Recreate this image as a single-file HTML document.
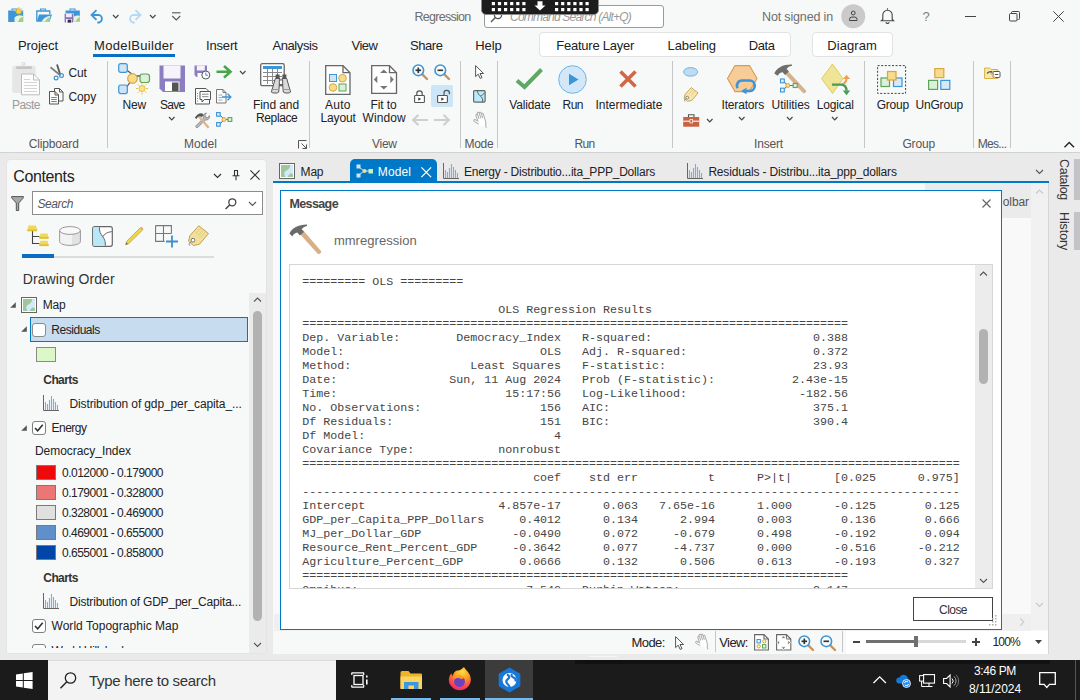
<!DOCTYPE html>
<html><head><meta charset="utf-8"><title>Regression</title>
<style>
html,body{margin:0;padding:0;}
body{width:1080px;height:700px;position:relative;overflow:hidden;background:#eaeaea;font-family:"Liberation Sans",sans-serif;}
.a{position:absolute;box-sizing:border-box;}
.t{position:absolute;white-space:pre;}
svg{overflow:visible;}
pre{margin:0;font-family:"Liberation Mono",monospace;}
</style></head><body>
<div class="a" style="left:0px;top:0px;width:1080px;height:152px;background:#f7f8f8;"></div>
<div class="a" style="left:0px;top:152px;width:1080px;height:1px;background:#d2d2d2;"></div>
<div class="a" style="left:484px;top:4.5px;width:180px;height:23.5px;background:#fff;border:1px solid #9a9a9a;border-radius:3px;"></div>
<svg class="a" style="left:490px;top:10px" width="13" height="13" viewBox="0 0 13 13"><circle cx="8" cy="5" r="3.6" fill="none" stroke="#555" stroke-width="1.3"/><path d="M5.400 7.600L1 12" stroke="#555" stroke-width="1.400"/></svg>
<span class="t" style="left:510.0px;top:9.0px;font-size:12px;line-height:16px;letter-spacing:-0.790px;color:#9a9a9a;font-style:italic;">Command Search (Alt+Q)</span>
<div class="a" style="left:481px;top:-2px;width:118px;height:17px;background:#1c1c1c;border:1px solid #8a8a8a;border-radius:0 0 5px 5px;"></div>
<svg class="a" style="left:0px;top:0px" width="1080" height="16" viewBox="0 0 1080 16"><rect x="491.8" y="2" width="3.200" height="3.200" fill="#fff"/><rect x="491.8" y="8" width="3.200" height="3.200" fill="#fff"/><rect x="497.9" y="2" width="3.200" height="3.200" fill="#fff"/><rect x="497.9" y="8" width="3.200" height="3.200" fill="#fff"/><rect x="504.0" y="2" width="3.200" height="3.200" fill="#fff"/><rect x="504.0" y="8" width="3.200" height="3.200" fill="#fff"/><rect x="510.1" y="2" width="3.200" height="3.200" fill="#fff"/><rect x="510.1" y="8" width="3.200" height="3.200" fill="#fff"/><rect x="516.2" y="2" width="3.200" height="3.200" fill="#fff"/><rect x="516.2" y="8" width="3.200" height="3.200" fill="#fff"/><rect x="522.3" y="2" width="3.200" height="3.200" fill="#fff"/><rect x="522.3" y="8" width="3.200" height="3.200" fill="#fff"/><rect x="555.0" y="2" width="3.200" height="3.200" fill="#fff"/><rect x="555.0" y="8" width="3.200" height="3.200" fill="#fff"/><rect x="561.1" y="2" width="3.200" height="3.200" fill="#fff"/><rect x="561.1" y="8" width="3.200" height="3.200" fill="#fff"/><rect x="567.2" y="2" width="3.200" height="3.200" fill="#fff"/><rect x="567.2" y="8" width="3.200" height="3.200" fill="#fff"/><rect x="573.3" y="2" width="3.200" height="3.200" fill="#fff"/><rect x="573.3" y="8" width="3.200" height="3.200" fill="#fff"/><rect x="579.4" y="2" width="3.200" height="3.200" fill="#fff"/><rect x="579.4" y="8" width="3.200" height="3.200" fill="#fff"/><rect x="585.5" y="2" width="3.200" height="3.200" fill="#fff"/><rect x="585.5" y="8" width="3.200" height="3.200" fill="#fff"/><path d="M537.500 1.300h5v4.200h3l-5.500 5-5.500-5h3z" fill="#fff"/></svg>
<span class="t" style="left:414.5px;top:9.0px;font-size:12.5px;line-height:16px;letter-spacing:-0.722px;color:#6e6e6e;">Regression</span>
<span class="t" style="left:762.0px;top:9.0px;font-size:12.5px;line-height:16px;letter-spacing:-0.151px;color:#6e6e6e;">Not signed in</span>
<div class="a" style="left:539px;top:32px;width:252px;height:25px;background:#fff;border:1px solid #e2e2e2;border-radius:4px;"></div>
<div class="a" style="left:812px;top:32px;width:81px;height:25px;background:#fff;border:1px solid #e2e2e2;border-radius:4px;"></div>
<span class="t" style="left:18.0px;top:37.5px;font-size:13px;line-height:16px;letter-spacing:-0.065px;color:#222;">Project</span>
<span class="t" style="left:94.0px;top:37.5px;font-size:13px;line-height:16px;letter-spacing:0.344px;color:#222;">ModelBuilder</span>
<div class="a" style="left:93px;top:54px;width:82px;height:2.5px;background:#0a6ec4;"></div>
<span class="t" style="left:206.0px;top:37.5px;font-size:13px;line-height:16px;letter-spacing:-0.168px;color:#222;">Insert</span>
<span class="t" style="left:272.5px;top:37.5px;font-size:13px;line-height:16px;letter-spacing:-0.426px;color:#222;">Analysis</span>
<span class="t" style="left:351.5px;top:37.5px;font-size:13px;line-height:16px;letter-spacing:-0.485px;color:#222;">View</span>
<span class="t" style="left:410.0px;top:37.5px;font-size:13px;line-height:16px;letter-spacing:-0.438px;color:#222;">Share</span>
<span class="t" style="left:475.2px;top:37.5px;font-size:13px;line-height:16px;letter-spacing:-0.084px;color:#222;">Help</span>
<span class="t" style="left:556.3px;top:37.5px;font-size:13px;line-height:16px;letter-spacing:-0.248px;color:#222;">Feature Layer</span>
<span class="t" style="left:667.5px;top:37.5px;font-size:13px;line-height:16px;letter-spacing:-0.082px;color:#222;">Labeling</span>
<span class="t" style="left:748.8px;top:37.5px;font-size:13px;line-height:16px;letter-spacing:-0.415px;color:#222;">Data</span>
<span class="t" style="left:827.2px;top:37.5px;font-size:13px;line-height:16px;letter-spacing:0.097px;color:#222;">Diagram</span>
<div class="a" style="left:107.0px;top:61px;width:1px;height:87px;background:#c6c6c6;"></div>
<div class="a" style="left:309.0px;top:61px;width:1px;height:87px;background:#c6c6c6;"></div>
<div class="a" style="left:460.0px;top:61px;width:1px;height:87px;background:#c6c6c6;"></div>
<div class="a" style="left:497.0px;top:61px;width:1px;height:87px;background:#c6c6c6;"></div>
<div class="a" style="left:672.2px;top:61px;width:1px;height:87px;background:#c6c6c6;"></div>
<div class="a" style="left:864.0px;top:61px;width:1px;height:87px;background:#c6c6c6;"></div>
<div class="a" style="left:973.0px;top:61px;width:1px;height:87px;background:#c6c6c6;"></div>
<div class="a" style="left:1009.8px;top:61px;width:1px;height:87px;background:#c6c6c6;"></div>
<span class="t" style="left:12.0px;top:97.0px;font-size:12px;line-height:16px;letter-spacing:-0.537px;color:#9a9a9a;">Paste</span>
<span class="t" style="left:68.5px;top:65.0px;font-size:12px;line-height:16px;letter-spacing:-0.158px;color:#222;">Cut</span>
<span class="t" style="left:68.5px;top:89.0px;font-size:12px;line-height:16px;letter-spacing:-0.128px;color:#222;">Copy</span>
<span class="t" style="left:28.7px;top:136.0px;font-size:12px;line-height:16px;letter-spacing:-0.151px;color:#555;">Clipboard</span>
<span class="t" style="left:122.6px;top:97.0px;font-size:12px;line-height:16px;letter-spacing:-0.202px;color:#222;">New</span>
<span class="t" style="left:160.0px;top:97.0px;font-size:12px;line-height:16px;letter-spacing:-0.763px;color:#222;">Save</span>
<span class="t" style="left:184.0px;top:136.0px;font-size:12px;line-height:16px;letter-spacing:0.064px;color:#555;">Model</span>
<span class="t" style="left:253.0px;top:97.0px;font-size:12px;line-height:16px;letter-spacing:-0.087px;color:#222;">Find and</span>
<span class="t" style="left:256.0px;top:110.0px;font-size:12px;line-height:16px;letter-spacing:-0.375px;color:#222;">Replace</span>
<span class="t" style="left:325.0px;top:97.0px;font-size:12px;line-height:16px;letter-spacing:0.254px;color:#222;">Auto</span>
<span class="t" style="left:320.5px;top:110.0px;font-size:12px;line-height:16px;letter-spacing:-0.138px;color:#222;">Layout</span>
<span class="t" style="left:370.4px;top:97.0px;font-size:12px;line-height:16px;letter-spacing:-0.062px;color:#222;">Fit to</span>
<span class="t" style="left:362.6px;top:110.0px;font-size:12px;line-height:16px;letter-spacing:0.054px;color:#222;">Window</span>
<span class="t" style="left:372.0px;top:136.0px;font-size:12px;line-height:16px;letter-spacing:-0.273px;color:#555;">View</span>
<span class="t" style="left:464.4px;top:136.0px;font-size:12px;line-height:16px;letter-spacing:-0.229px;color:#555;">Mode</span>
<span class="t" style="left:509.3px;top:97.0px;font-size:12px;line-height:16px;letter-spacing:-0.172px;color:#222;">Validate</span>
<span class="t" style="left:562.6px;top:97.0px;font-size:12px;line-height:16px;letter-spacing:-0.604px;color:#222;">Run</span>
<span class="t" style="left:595.4px;top:97.0px;font-size:12px;line-height:16px;letter-spacing:0.025px;color:#222;">Intermediate</span>
<span class="t" style="left:574.4px;top:136.0px;font-size:12px;line-height:16px;letter-spacing:-0.671px;color:#555;">Run</span>
<span class="t" style="left:721.5px;top:97.0px;font-size:12px;line-height:16px;letter-spacing:-0.168px;color:#222;">Iterators</span>
<span class="t" style="left:771.5px;top:97.0px;font-size:12px;line-height:16px;letter-spacing:-0.041px;color:#222;">Utilities</span>
<span class="t" style="left:816.7px;top:97.0px;font-size:12px;line-height:16px;letter-spacing:-0.146px;color:#222;">Logical</span>
<span class="t" style="left:754.0px;top:136.0px;font-size:12px;line-height:16px;letter-spacing:-0.168px;color:#555;">Insert</span>
<span class="t" style="left:876.7px;top:97.0px;font-size:12px;line-height:16px;letter-spacing:-0.230px;color:#222;">Group</span>
<span class="t" style="left:915.4px;top:97.0px;font-size:12px;line-height:16px;letter-spacing:-0.170px;color:#222;">UnGroup</span>
<span class="t" style="left:902.4px;top:136.0px;font-size:12px;line-height:16px;letter-spacing:-0.150px;color:#555;">Group</span>
<span class="t" style="left:977.7px;top:136.0px;font-size:12px;line-height:16px;letter-spacing:-0.678px;color:#555;">Mes...</span>
<svg class="a" style="left:8px;top:7px" width="16" height="16" viewBox="0 0 16 16"><path d="M4 3.5v-1.5h5v1.5" fill="none" stroke="#3b95d6" stroke-width="1.1"/>
<rect x="0.2" y="3.5" width="15" height="11.5" fill="#3b95d6"/>
<path d="M6.5 15V10.5c3-2.5 5.5-2.8 8.5-1.5V15z" fill="#e6f3e0"/><path d="M10 15c1-3 2.5-4.5 5-5v5z" fill="#9ccf8a"/>
<circle cx="10.8" cy="4.3" r="2.6" fill="#f4d24a" stroke="#e0b020" stroke-width="0.8"/>
<path d="M10.8 0v1M10.8 7.6v1M6.5 4.3h1M14.1 4.3h1M7.8 1.3l.7.7M13.8 1.3l-.7.7M7.8 7.3l.7-.7M13.8 7.3l-.7-.7" stroke="#e6b820" stroke-width="0.9"/></svg>
<svg class="a" style="left:36px;top:7px" width="16" height="16" viewBox="0 0 16 16"><path d="M4.5 3.5v-1.5h5v1.5" fill="none" stroke="#3b95d6" stroke-width="1.1"/>
<path d="M0.8 14.5V4h13v3" fill="none" stroke="#3b95d6" stroke-width="1.3"/>
<path d="M0.8 14.8L3 7.5h13L13.5 14.8z" fill="#3b95d6"/>
<path d="M5.5 14.8c1.5-3.5 4.5-5.5 9-6l-1.6 6z" fill="#e6f3e0"/><path d="M9 14.8c1-2.5 2.8-4 5-4.6l-1.2 4.6z" fill="#9ccf8a"/></svg>
<svg class="a" style="left:64px;top:7px" width="16" height="16" viewBox="0 0 16 16"><path d="M6 3.5v-1.5h5v1.5" fill="none" stroke="#3b95d6" stroke-width="1.1"/>
<rect x="1.5" y="3.5" width="14.3" height="11" fill="#3b95d6"/>
<path d="M10 14.5V9.5c2-1.2 3.8-1.3 5.8-.6V14.5z" fill="#e6f3e0"/><path d="M12 14.5c.6-2.4 1.8-3.6 3.8-4.2v4.2z" fill="#9ccf8a"/>
<rect x="0.3" y="6.5" width="9.2" height="9.3" rx="0.8" fill="#8a6fc0" stroke="#f7f8f8" stroke-width="0.6"/>
<rect x="2" y="7" width="5.8" height="3.2" fill="#efeaf8"/><rect x="2" y="12" width="5.8" height="3.6" fill="#fff"/><rect x="3.6" y="12.6" width="3.6" height="3" fill="#333"/></svg>
<svg class="a" style="left:90px;top:9px" width="15" height="15" viewBox="0 0 15 15"><path d="M6.5 1.2L1.5 6l5 4.8M1.8 6h7.5a4 4 0 0 1 0 7.5h-2" fill="none" stroke="#3b95d6" stroke-width="1.8"/></svg>
<svg class="a" style="left:112.55px;top:15.1px" width="5.5" height="2.8" viewBox="0 0 5.5 2.8"><path d="M0 0L2.75 2.8L5.5 0" fill="none" stroke="#444" stroke-width="1.2"/></svg>
<svg class="a" style="left:126.5px;top:9px" width="15" height="15" viewBox="0 0 15 15"><path d="M8.5 1.2L13.5 6l-5 4.8M13.2 6h-7.5a4 4 0 0 0 0 7.5h2" fill="none" stroke="#b5d9f2" stroke-width="1.8"/></svg>
<svg class="a" style="left:149.55px;top:15.1px" width="5.5" height="2.8" viewBox="0 0 5.5 2.8"><path d="M0 0L2.75 2.8L5.5 0" fill="none" stroke="#444" stroke-width="1.2"/></svg>
<svg class="a" style="left:171.5px;top:12px" width="8.5" height="9" viewBox="0 0 8.5 9"><path d="M0 0.8h8.5" stroke="#555" stroke-width="1.1"/><path d="M0.3 4L4.25 8L8.2 4" fill="none" stroke="#555" stroke-width="1.1"/></svg>
<svg class="a" style="left:840.5px;top:3.5px" width="24.5" height="24.5" viewBox="0 0 24.5 24.5"><circle cx="12.25" cy="12.25" r="12" fill="#cacaca"/><circle cx="12.25" cy="9" r="1.900" fill="none" stroke="#444" stroke-width="1"/><path d="M8.500 16.500v-1.200a2.200 2.200 0 0 1 2.200-2.200h3.100a2.200 2.200 0 0 1 2.200 2.200v1.200z" fill="none" stroke="#444" stroke-width="1"/></svg>
<svg class="a" style="left:880px;top:7px" width="15" height="17" viewBox="0 0 15 17"><path d="M7.5 1.2v1.3M2.8 12.5V8a4.7 4.7 0 0 1 9.4 0v4.5l1.4 1.3H1.4z" fill="none" stroke="#444" stroke-width="1.1"/><path d="M5.8 15.2a1.8 1.8 0 0 0 3.4 0" fill="none" stroke="#444" stroke-width="1.1"/></svg>
<span class="t" style="left:922.5px;top:9.0px;font-size:13px;line-height:16px;letter-spacing:-0.729px;color:#808080;">?</span>
<div class="a" style="left:965px;top:15.5px;width:10.5px;height:1px;background:#444;"></div>
<svg class="a" style="left:1009px;top:11px" width="11" height="11" viewBox="0 0 11 11"><rect x="0.5" y="2.5" width="7.5" height="7.5" rx="1" fill="none" stroke="#444" stroke-width="1"/><path d="M2.5 2.5v-1a1 1 0 0 1 1-1h6a1 1 0 0 1 1 1v6a1 1 0 0 1-1 1h-1" fill="none" stroke="#444" stroke-width="1"/></svg>
<svg class="a" style="left:1052.5px;top:11px" width="11" height="11" viewBox="0 0 11 11"><path d="M0.3 0.3l10.4 10.4M10.7 0.3L0.3 10.7" stroke="#444" stroke-width="1"/></svg>
<svg class="a" style="left:12px;top:62px" width="29" height="34" viewBox="0 0 29 34"><rect x="0.200" y="3.700" width="23.500" height="27.300" rx="2" fill="#e6e6e6"/>
<rect x="4" y="4.200" width="16" height="2.800" rx="1" fill="#c6c6c6"/><circle cx="11.5" cy="1.8" r="1.4" fill="none" stroke="#d2d2d2"/>
<path d="M9.500 12h12l6 6v14.800h-18z" fill="#fdfdfd" stroke="#bcbcbc"/><path d="M21.500 12v6h6" fill="none" stroke="#bcbcbc"/>
<path d="M12 17.500h6M12 20.500h13M12 23.500h13M12 26.500h13M12 29.500h13" stroke="#d4d4d4"/></svg>
<svg class="a" style="left:49.5px;top:63.5px" width="14" height="17" viewBox="0 0 14 17"><path d="M7 0.500L10 10" fill="none" stroke="#555" stroke-width="1.800"/><path d="M0.500 3.200L10.500 11.500" fill="none" stroke="#808080" stroke-width="1.800"/>
<circle cx="6.100" cy="14" r="1.900" fill="none" stroke="#3b95d6" stroke-width="1.200"/><circle cx="11.500" cy="11.500" r="1.900" fill="none" stroke="#3b95d6" stroke-width="1.200"/></svg>
<svg class="a" style="left:49px;top:88px" width="15" height="17" viewBox="0 0 15 17"><path d="M5.500 3.500v-3h5l3.500 3.500v9h-4" fill="#fbfbfb" stroke="#555"/><path d="M10.500 0.500v3.500h3.500" fill="none" stroke="#555"/>
<path d="M0.500 3.500h5.500l3.500 3.500v9h-9z" fill="#fbfbfb" stroke="#555"/><path d="M6 3.500v3.500h3.500" fill="none" stroke="#555"/>
<path d="M2.200 9.500h5.600M2.200 11.500h5.600M2.200 13.500h5.600" stroke="#3b95d6"/></svg>
<svg class="a" style="left:118px;top:63px" width="33" height="32" viewBox="0 0 33 32"><path d="M8 6.5L15 12M8 25L15 15M17 13h8" stroke="#555" stroke-width="1.3"/>
<rect x="0.7" y="0.7" width="8.6" height="8.6" rx="2" fill="#cfe4f6" stroke="#3b95d6" stroke-width="1.2"/>
<rect x="0.7" y="22" width="8.6" height="8.6" rx="2" fill="#cfe4f6" stroke="#3b95d6" stroke-width="1.2"/>
<rect x="22" y="11" width="9.5" height="8.5" rx="2.5" fill="#dcefd8" stroke="#5aa55a" stroke-width="1.2"/>
<circle cx="14.5" cy="15.5" r="4.8" fill="#f6dc8c" stroke="#d9a640" stroke-width="1.2"/>
<circle cx="24" cy="25.5" r="3" fill="#f8e48c" stroke="#e6c040" stroke-width="1"/>
<path d="M24 19.5v2M24 29.5v2M18 25.5h2M28 25.5h2M19.8 21.3l1.4 1.4M28.2 21.3l-1.4 1.4M19.8 29.7l1.4-1.4M28.2 29.7l-1.4-1.4" stroke="#e6c040" stroke-width="1"/></svg>
<svg class="a" style="left:159px;top:64.5px" width="27" height="28" viewBox="0 0 27 28"><path d="M0.500 0.500h25.500v26.500h-22l-3.500-3.500z" fill="#8c7cc0"/><rect x="4.500" y="0.500" width="17" height="13" fill="#f6f3fb"/>
<rect x="6" y="16.500" width="14.500" height="9.500" fill="#fff"/><rect x="13" y="17.500" width="6.500" height="8.500" fill="#555"/></svg>
<svg class="a" style="left:169.25px;top:117.3px" width="5.5" height="2.8" viewBox="0 0 5.5 2.8"><path d="M0 0L2.75 2.8L5.5 0" fill="none" stroke="#444" stroke-width="1.2"/></svg>
<svg class="a" style="left:194px;top:65px" width="17" height="15" viewBox="0 0 17 15"><path d="M0.5 0.5h12.5v11.5h-10.5l-2-2z" fill="#8c7cc0"/><rect x="2.8" y="0.5" width="8" height="5" fill="#f4f1fa"/><rect x="3.5" y="8" width="5" height="4" fill="#fff"/>
<circle cx="11.8" cy="10" r="4" fill="#fff" stroke="#555" stroke-width="1"/><path d="M11.8 7.5v2.7h2.2" fill="none" stroke="#3b95d6" stroke-width="1"/></svg>
<svg class="a" style="left:216px;top:65px" width="17" height="14" viewBox="0 0 17 14"><path d="M0.5 6.8h13M8 1l6.5 5.8L8 12.6" fill="none" stroke="#4aa54a" stroke-width="2.6"/></svg>
<svg class="a" style="left:239.65px;top:71.1px" width="5.5" height="2.8" viewBox="0 0 5.5 2.8"><path d="M0 0L2.75 2.8L5.5 0" fill="none" stroke="#444" stroke-width="1.2"/></svg>
<svg class="a" style="left:194.5px;top:88px" width="16" height="17" viewBox="0 0 16 17"><path d="M0.5 0.5h10.5l3.5 3.5v12h-14z" fill="#fbfbfb" stroke="#555"/>
<path d="M2 5.5h1M2 8h1M2 10.5h1M2 13h1" stroke="#3b95d6" stroke-width="1.2"/>
<path d="M5 3.5h10.5v8h-6l-2.5 2.5v-2.5h-2z" fill="#fff" stroke="#555"/><path d="M7 6.2h6.5M7 8.7h6.5" stroke="#888"/></svg>
<svg class="a" style="left:216px;top:89px" width="17" height="15" viewBox="0 0 17 15"><path d="M0.5 0.5h6.5l3 3v10.5h-9.5z" fill="#fbfbfb" stroke="#777"/><path d="M7 0.5v3h3" fill="none" stroke="#777"/>
<path d="M2.5 6h4M2.5 8.5h4M2.5 11h4" stroke="#aaa"/><path d="M6 8h8.5M11.5 4.8l3.3 3.2-3.3 3.2" fill="none" stroke="#3b95d6" stroke-width="1.4"/></svg>
<svg class="a" style="left:194px;top:111.5px" width="17" height="17" viewBox="0 0 17 17"><path d="M13.5 1.5a3.6 3.6 0 0 0-3 5.2L3 14.2a1.3 1.3 0 0 0 1.8 1.8l7.5-7.5a3.6 3.6 0 0 0 4.2-4.4l-2 2-2-.6-.6-2z" fill="#b8b8b8" stroke="#777" stroke-width="0.7" transform="translate(-1,-0.5)"/>
<path d="M5.5 3.5l10 11.5-1.8 1.6L4 5z" fill="#dbb48a"/>
<path d="M0.8 5.8c1.5-3 4.2-4.8 7.2-4.6l1.6 1.8-2.2 2.2-1.4-1.2c-1.6.4-2.8 1.6-3.4 3z" fill="#555"/></svg>
<svg class="a" style="left:216px;top:112px" width="17" height="15" viewBox="0 0 17 15"><path d="M4 3L8 7.5L4 12M9 7.5h3" fill="none" stroke="#666" stroke-width="1"/>
<rect x="0.6" y="0.6" width="3.6" height="3.6" fill="#e0effa" stroke="#3b95d6" stroke-width="1.1"/><rect x="0.6" y="10.6" width="3.6" height="3.6" fill="#e0effa" stroke="#3b95d6" stroke-width="1.1"/>
<circle cx="8" cy="7.5" r="2" fill="#f6dc8c" stroke="#d9a640" stroke-width="1"/><rect x="12" y="5.6" width="3.8" height="3.8" fill="#e2f2de" stroke="#5aa55a" stroke-width="1.1"/></svg>
<svg class="a" style="left:260px;top:63px" width="33" height="33" viewBox="0 0 33 33"><rect x="0.7" y="0.7" width="23.5" height="22" rx="1.5" fill="#fff" stroke="#666" stroke-width="1.3"/>
<rect x="3" y="3" width="19" height="3" fill="#3b95d6"/>
<path d="M3 9.5h19M3 13.5h19M3 17.5h19M7.5 6v15M12.5 6v15M17.5 6v15" stroke="#888" stroke-width="1"/>
<path d="M15.300 15.500h4.600l-1.200 13.600c-.8 1.300-6.600 1.300-7.300 0z" fill="#dadada" stroke="#555" stroke-width="1"/><path d="M22.100 15.500h4.600l3.900 13.600c-.7 1.300-6.500 1.300-7.300 0z" fill="#dadada" stroke="#555" stroke-width="1"/>
<rect x="15.600" y="11.500" width="4" height="4.500" fill="#555"/><rect x="22.400" y="11.500" width="4" height="4.500" fill="#555"/><path d="M11.400 26.500h7.300M23.300 26.500h7.300" stroke="#999" stroke-width="1"/>
<rect x="19.300" y="17" width="3.400" height="4.500" fill="#fff" stroke="#555" stroke-width="0.900"/></svg>
<svg class="a" style="left:298px;top:140px" width="9" height="9" viewBox="0 0 9 9"><path d="M0.5 8.5v-8h8" fill="none" stroke="#555" stroke-width="1"/><path d="M3.5 3.500l5 5M8.500 4.500v4h-4" fill="none" stroke="#555" stroke-width="1"/></svg>
<svg class="a" style="left:325px;top:64.5px" width="26" height="30" viewBox="0 0 26 30"><path d="M0.7 0.7h17.300l7 7v21.600h-24.300z" fill="#fff" stroke="#666" stroke-width="1.300"/><path d="M18 0.700v7h7" fill="none" stroke="#666" stroke-width="1.300"/>
<rect x="4.500" y="9.500" width="7" height="7" fill="#cfe4f6" stroke="#3b95d6"/><circle cx="17.500" cy="13.200" r="3.800" fill="#f6dc8c" stroke="#d9a640"/>
<circle cx="8" cy="22.500" r="3.800" fill="#f6dc8c" stroke="#d9a640"/><rect x="14" y="19" width="7" height="7" fill="#dcefd8" stroke="#5aa55a"/></svg>
<svg class="a" style="left:370.5px;top:65px" width="26" height="29" viewBox="0 0 26 29"><path d="M0.700 0.700h17.800l7 7v20.600h-24.800z" fill="#fff" stroke="#666" stroke-width="1.300"/><path d="M18.500 0.700v7h7" fill="none" stroke="#666" stroke-width="1.300"/>
<path d="M12.800 4.500l3.800 3.500h-7.600zM12.800 24.500l3.800-3.500h-7.600zM2.800 14.500l3.500-3.800v7.600zM22.800 14.500l-3.500-3.800v7.600z" fill="#777"/></svg>
<svg class="a" style="left:412px;top:64px" width="16.0" height="16.0" viewBox="0 0 16 16"><path d="M9.800 9.800L15 15" stroke="#c8935a" stroke-width="2.400" stroke-linecap="round"/><circle cx="6.300" cy="6.300" r="5.300" fill="#fff" stroke="#3b95d6" stroke-width="1.600"/><path d="M3.500 6.300h5.600" stroke="#333" stroke-width="1.700"/><path d="M6.300 3.500v5.600" stroke="#333" stroke-width="1.700"/></svg>
<svg class="a" style="left:434px;top:64px" width="16.0" height="16.0" viewBox="0 0 16 16"><path d="M9.800 9.800L15 15" stroke="#c8935a" stroke-width="2.400" stroke-linecap="round"/><circle cx="6.300" cy="6.300" r="5.300" fill="#fff" stroke="#3b95d6" stroke-width="1.600"/><path d="M3.500 6.300h5.600" stroke="#333" stroke-width="1.700"/></svg>
<svg class="a" style="left:414px;top:89.5px" width="11" height="13" viewBox="0 0 11 13"><path d="M2.800 5.500v-2a2.700 2.700 0 0 1 5.400 0v2" fill="none" stroke="#555" stroke-width="1.200"/><rect x="0.600" y="5.500" width="9.800" height="7" rx="0.800" fill="#fff" stroke="#555" stroke-width="1.100"/><path d="M4.300 7.500l2.800 1.600-2.800 1.600z" fill="#333"/></svg>
<div class="a" style="left:431px;top:85px;width:22px;height:22px;background:#cce6f8;border-radius:2px;"></div>
<svg class="a" style="left:436.5px;top:88.5px" width="14" height="14" viewBox="0 0 14 14"><path d="M7 6.500v-2.500a2.700 2.700 0 0 1 5.400 0v1.200" fill="none" stroke="#555" stroke-width="1.200"/><rect x="0.600" y="6.500" width="9.800" height="7" rx="0.800" fill="#fff" stroke="#555" stroke-width="1.100"/><path d="M4.300 8.500l2.800 1.600-2.800 1.600z" fill="#333"/></svg>
<svg class="a" style="left:412px;top:113.5px" width="16" height="12" viewBox="0 0 16 12"><path d="M1 6h15M6.500 0.800L1.200 6l5.300 5.200" fill="none" stroke="#cfcfcf" stroke-width="2.200"/></svg>
<svg class="a" style="left:434px;top:113.5px" width="16" height="12" viewBox="0 0 16 12"><path d="M0 6h15M9.500 0.800L14.800 6l-5.300 5.200" fill="none" stroke="#cfcfcf" stroke-width="2.200"/></svg>
<svg class="a" style="left:475px;top:65px" width="10" height="14" viewBox="0 0 10 14"><path d="M0.600 0.600v11l2.600-2.400 2 4.200 1.800-.8-2-4.100h3.600z" fill="#fff" stroke="#555" stroke-width="1"/></svg>
<svg class="a" style="left:473px;top:90px" width="13" height="13" viewBox="0 0 13 13"><rect x="0.600" y="0.600" width="11.500" height="11.500" rx="1" fill="#b8ecf8" stroke="#666" stroke-width="1.200"/><path d="M4.500 0.600c0 3 1.500 4.500 3 5.500s2.500 3 2.200 6M7.500 6c1.500-.5 3-1.800 4.500-3.500" fill="none" stroke="#555" stroke-width="0.900"/></svg>
<svg class="a" style="left:470.5px;top:110.5px" width="17.5" height="19.5" viewBox="0 0 16 18"><path d="M4.500 10.500l-3-3.500c-.8-1 .5-2 1.400-1.200l1.800 1.800v-5.200c0-1.200 1.700-1.200 1.700 0v3.600-5c0-1.200 1.800-1.200 1.800 0v5-4.400c0-1.200 1.700-1.200 1.700 0v4.800-3.200c0-1.200 1.600-1.200 1.600 0v6.300c0 2-.6 3-1.200 4.500v2" fill="#fff" stroke="#b0b0b0" stroke-width="1" transform="rotate(-18 8 9) translate(1.500,1)"/></svg>
<svg class="a" style="left:515px;top:67px" width="29" height="23" viewBox="0 0 29 23"><path d="M2 13.500l7.500 6.500L26.500 2.500" fill="none" stroke="#5ea864" stroke-width="4"/></svg>
<svg class="a" style="left:557.5px;top:64.5px" width="29" height="29" viewBox="0 0 29 29"><circle cx="14.500" cy="14.500" r="13.800" fill="#d2e7f7" stroke="#72b4e4" stroke-width="1"/><path d="M11 8.800l9.500 5.700-9.500 5.700z" fill="#3b95d6"/></svg>
<svg class="a" style="left:619px;top:70px" width="18" height="18" viewBox="0 0 18 18"><path d="M1.500 1.500l15 15M16.500 1.500l-15 15" stroke="#d06848" stroke-width="3.600"/></svg>
<svg class="a" style="left:683px;top:67px" width="16" height="10" viewBox="0 0 16 10"><ellipse cx="7.600" cy="4.900" rx="7" ry="4.300" fill="#bcdcf4" stroke="#7ab4e0" stroke-width="1"/></svg>
<svg class="a" style="left:683px;top:87px" width="16" height="16" viewBox="0 0 16 16"><g transform="scale(0.700)"><path d="M3 10.500L11.800 0.800L21.500 8.500L12.500 19.200L6.500 20.500L1.500 16.200z" fill="#f6e6ac" stroke="#c0a050" stroke-width="1.300"/><path d="M9 9.500l6-6.200M11.500 12l6.500-6.700" stroke="#dcc478" stroke-width="1"/><circle cx="6" cy="15.200" r="2" fill="#fff" stroke="#777" stroke-width="1.300"/><path d="M4.600 16.600c-1.800.8-3.200 2.200-1.800 4" fill="none" stroke="#777" stroke-width="1.300"/></g></svg>
<svg class="a" style="left:683px;top:113.5px" width="17" height="13" viewBox="0 0 17 13"><path d="M5.500 3v-2.300h5.500v2.300" fill="none" stroke="#555" stroke-width="1.100"/><rect x="0.200" y="3" width="16" height="9.700" fill="#c9623f"/><path d="M0.200 7.200h16" stroke="#fff" stroke-width="1.100"/><rect x="7" y="5.400" width="2.600" height="3.600" fill="#c9623f" stroke="#eee" stroke-width="0.800"/></svg>
<svg class="a" style="left:706.75px;top:119.1px" width="5.5" height="2.8" viewBox="0 0 5.5 2.8"><path d="M0 0L2.75 2.8L5.5 0" fill="none" stroke="#444" stroke-width="1.2"/></svg>
<svg class="a" style="left:727px;top:65px" width="31" height="29" viewBox="0 0 31 29"><path d="M8 0.600h14.500l7.500 13-7.500 13h-14.500l-7.500-13z" fill="#f8cc96" stroke="#d99a58" stroke-width="1.100"/>
<path d="M16.500 26h6a5 5 0 0 0 0-10.500h-7.500a5 5 0 0 0-4.300 7.600" fill="none" stroke="#3b95d6" stroke-width="2.600"/><path d="M19.500 22.800l-5.500 3.200 5.500 3.200z" fill="#3b95d6"/></svg>
<svg class="a" style="left:739.25px;top:117.3px" width="5.5" height="2.8" viewBox="0 0 5.5 2.8"><path d="M0 0L2.75 2.8L5.5 0" fill="none" stroke="#444" stroke-width="1.2"/></svg>
<svg class="a" style="left:773.5px;top:63.5px" width="33" height="31" viewBox="0 0 33 31"><path d="M12.500 5.500l19.500 21c.9 1.300-1.600 3.500-2.900 2.400L9.500 8.500z" fill="#d4b290"/>
<path d="M0.300 9.500c2.500-5.800 8.500-9.200 17.700-9v1.300c-2.500.4-4.200 1.500-5.400 3.100l2.300 2.600-3.800 3.400-2.500-2.700c-2.200.2-3.800 1.500-5 3.600z" fill="#6e6e6e"/>
<path d="M9.500 17l4 4.500-4 4.500M14.500 21.500h4.500" fill="none" stroke="#666" stroke-width="1"/>
<rect x="6.500" y="15" width="3.800" height="3.800" fill="#e0effa" stroke="#3b95d6" stroke-width="1.100"/><rect x="6.500" y="24.200" width="3.800" height="3.800" fill="#e0effa" stroke="#3b95d6" stroke-width="1.100"/>
<circle cx="13.800" cy="21.500" r="2" fill="#f6dc8c" stroke="#d9a640" stroke-width="1"/><rect x="19.200" y="19.500" width="4" height="4" fill="#e2f2de" stroke="#5aa55a" stroke-width="1.100"/></svg>
<svg class="a" style="left:787.25px;top:117.3px" width="5.5" height="2.8" viewBox="0 0 5.5 2.8"><path d="M0 0L2.75 2.8L5.5 0" fill="none" stroke="#444" stroke-width="1.2"/></svg>
<svg class="a" style="left:821px;top:63px" width="31" height="33" viewBox="0 0 31 33"><path d="M11.500 1L22 15.700L11.500 30.400L0.600 15.700z" fill="#f0e496" stroke="#e0cc60" stroke-width="1"/>
<path d="M20.500 21.500c3.500-1 5-3.500 5-6.500" fill="none" stroke="#f0a050" stroke-width="2.200"/><path d="M21.800 16l3.700-4.300 3.700 4.300z" fill="#f0a050"/>
<path d="M11 21.600h8.500c3.800 0 6 2.300 6 6.200" fill="none" stroke="#4a9a58" stroke-width="2.400"/><path d="M21.800 27.500h7.400l-3.700 4.700z" fill="#4a9a58"/></svg>
<svg class="a" style="left:831.75px;top:117.3px" width="5.5" height="2.8" viewBox="0 0 5.5 2.8"><path d="M0 0L2.75 2.8L5.5 0" fill="none" stroke="#444" stroke-width="1.2"/></svg>
<svg class="a" style="left:877px;top:65px" width="30" height="29" viewBox="0 0 30 29"><rect x="0.600" y="0.600" width="28" height="27.800" fill="none" stroke="#444" stroke-width="1" stroke-dasharray="2 1.600"/>
<rect x="4" y="13" width="8.500" height="8.500" fill="#dcefd8" stroke="#5aa55a" stroke-width="1.200"/><rect x="16.500" y="13" width="8.500" height="8.500" fill="#d6e9f8" stroke="#3b95d6" stroke-width="1.200"/>
<rect x="10.500" y="6.500" width="8.500" height="8.500" fill="#f6dc8c" stroke="#d9a640" stroke-width="1.200"/></svg>
<svg class="a" style="left:927.5px;top:68px" width="23" height="22" viewBox="0 0 23 22"><rect x="6.800" y="0.600" width="9" height="9" fill="#f6dc8c" stroke="#d9a640" stroke-width="1.200"/>
<rect x="0.600" y="12.400" width="9" height="9" fill="#dcefd8" stroke="#5aa55a" stroke-width="1.200"/><rect x="12.800" y="12.400" width="9" height="9" fill="#d6e9f8" stroke="#3b95d6" stroke-width="1.200"/></svg>
<svg class="a" style="left:984px;top:65.5px" width="17" height="14" viewBox="0 0 17 14"><path d="M0.600 12.500v-10.500h5l1.500 1.500h6.500v9z" fill="#f8e8a8" stroke="#d8b040" stroke-width="1"/>
<rect x="9" y="5.500" width="7" height="6" rx="1" fill="#fff" stroke="#555" stroke-width="1"/><path d="M10.800 8.500h3.500" stroke="#555"/>
<path d="M2.500 7c1.500-1.800 3.500-2.400 5.500-2l.6 1-1.500 1.200-.8-.6c-1 0-2 .5-2.600 1.400z" fill="#555"/><path d="M6.500 6.800l5 6" stroke="#dcb690" stroke-width="1.400"/></svg>
<svg class="a" style="left:1063.5px;top:141.8px" width="10.5" height="5.5" viewBox="0 0 10.5 5.5"><path d="M0.500 5.300l4.750-4.700 4.750 4.700" fill="none" stroke="#222" stroke-width="1.400"/></svg>
<div class="a" style="left:6px;top:159px;width:261px;height:494.5px;background:#f7f8f8;border:1px solid #e4e4e4;border-radius:4px 4px 0 0;"></div>
<span class="t" style="left:13.3px;top:168.8px;font-size:16px;line-height:16px;letter-spacing:-0.379px;color:#222;">Contents</span>
<div class="a" style="left:32px;top:191px;width:231px;height:23.5px;background:#fff;border:1px solid #8c8c8c;"></div>
<span class="t" style="left:37.5px;top:195.5px;font-size:12px;line-height:16px;letter-spacing:-0.420px;color:#555;font-style:italic;">Search</span>
<div class="a" style="left:22px;top:254px;width:32px;height:3.5px;background:#0a6ec4;"></div>
<div class="a" style="left:54px;top:256px;width:160px;height:1.7px;background:#dcdcdc;"></div>
<span class="t" style="left:22.8px;top:271.0px;font-size:14px;line-height:16px;letter-spacing:0.060px;color:#333;">Drawing Order</span>
<div class="a" style="left:249px;top:292.5px;width:17px;height:360.5px;background:#ebebeb;"></div>
<div class="a" style="left:253px;top:311px;width:9px;height:310px;background:#b2b2b2;border-radius:4.5px;"></div>
<span class="t" style="left:42.8px;top:297.0px;font-size:12px;line-height:16px;letter-spacing:-0.181px;color:#222;">Map</span>
<div class="a" style="left:30px;top:317px;width:218px;height:25px;background:#c8dcf0;border:1px solid #0078c8;"></div>
<div class="a" style="left:32px;top:323px;width:14px;height:14px;background:#fff;border:1px solid #8a8a8a;border-radius:3px;"></div>
<span class="t" style="left:51.3px;top:322.0px;font-size:12px;line-height:16px;letter-spacing:-0.466px;color:#222;">Residuals</span>
<div class="a" style="left:36px;top:346.5px;width:20px;height:15.5px;background:#dcf8c8;border:1px solid #8a8a8a;"></div>
<span class="t" style="left:43.3px;top:372.0px;font-size:12px;line-height:16px;letter-spacing:-0.585px;color:#333;font-weight:bold;">Charts</span>
<span class="t" style="left:69.5px;top:396.0px;font-size:12px;line-height:16px;letter-spacing:-0.118px;color:#222;">Distribution of gdp_per_capita_...</span>
<div class="a" style="left:32px;top:421px;width:14px;height:14px;background:#fff;border:1px solid #808080;border-radius:3px;"></div>
<span class="t" style="left:51.5px;top:420.0px;font-size:12px;line-height:16px;letter-spacing:-0.503px;color:#222;">Energy</span>
<span class="t" style="left:35.0px;top:442.5px;font-size:12px;line-height:16px;letter-spacing:-0.047px;color:#222;">Democracy_Index</span>
<div class="a" style="left:36px;top:464.5px;width:19.5px;height:15.5px;background:#ee0a0a;border:1px solid #7a7a7a;"></div>
<span class="t" style="left:62.0px;top:464.5px;font-size:12px;line-height:16px;letter-spacing:-0.513px;color:#222;">0.012000 - 0.179000</span>
<div class="a" style="left:36px;top:484.5px;width:19.5px;height:15.5px;background:#ec7676;border:1px solid #7a7a7a;"></div>
<span class="t" style="left:62.0px;top:484.5px;font-size:12px;line-height:16px;letter-spacing:-0.513px;color:#222;">0.179001 - 0.328000</span>
<div class="a" style="left:36px;top:504.5px;width:19.5px;height:15.5px;background:#e0e0e0;border:1px solid #7a7a7a;"></div>
<span class="t" style="left:62.0px;top:504.5px;font-size:12px;line-height:16px;letter-spacing:-0.513px;color:#222;">0.328001 - 0.469000</span>
<div class="a" style="left:36px;top:524.5px;width:19.5px;height:15.5px;background:#6090cc;border:1px solid #7a7a7a;"></div>
<span class="t" style="left:62.0px;top:524.5px;font-size:12px;line-height:16px;letter-spacing:-0.513px;color:#222;">0.469001 - 0.655000</span>
<div class="a" style="left:36px;top:544.5px;width:19.5px;height:15.5px;background:#0046a8;border:1px solid #7a7a7a;"></div>
<span class="t" style="left:62.0px;top:544.5px;font-size:12px;line-height:16px;letter-spacing:-0.513px;color:#222;">0.655001 - 0.858000</span>
<span class="t" style="left:43.3px;top:569.5px;font-size:12px;line-height:16px;letter-spacing:-0.585px;color:#333;font-weight:bold;">Charts</span>
<span class="t" style="left:69.5px;top:593.5px;font-size:12px;line-height:16px;letter-spacing:-0.199px;color:#222;">Distribution of GDP_per_Capita...</span>
<div class="a" style="left:32px;top:619px;width:14px;height:14px;background:#fff;border:1px solid #808080;border-radius:3px;"></div>
<span class="t" style="left:51.5px;top:618.0px;font-size:12px;line-height:16px;letter-spacing:0.034px;color:#222;">World Topographic Map</span>
<div class="a" style="left:8px;top:640px;width:240px;height:8px;overflow:hidden;">
<div class="a" style="left:24px;top:4.3px;width:14px;height:14px;background:#fff;border:1px solid #808080;border-radius:3px;"></div>
<span class="t" style="left:43.5px;top:2.8px;font-size:12px;line-height:16px;letter-spacing:-0.354px;color:#222;">World Hillshade</span>
</div>
<div class="a" style="left:273px;top:159px;width:776px;height:494.5px;background:#f9f9f9;"></div>
<div class="a" style="left:273px;top:159px;width:776px;height:22px;background:#eaeaea;"></div>
<div class="a" style="left:273px;top:181px;width:776px;height:2px;background:#0078c8;"></div>
<span class="t" style="left:300.6px;top:164.0px;font-size:12px;line-height:16px;letter-spacing:-0.214px;color:#222;">Map</span>
<div class="a" style="left:350px;top:159px;width:87px;height:23px;background:#0078c8;border-radius:5px 5px 0 0;"></div>
<span class="t" style="left:377.8px;top:164.0px;font-size:12px;line-height:16px;letter-spacing:0.104px;color:#fff;">Model</span>
<span class="t" style="left:463.9px;top:164.0px;font-size:12px;line-height:16px;letter-spacing:-0.219px;color:#222;">Energy - Distributio...ita_PPP_Dollars</span>
<span class="t" style="left:708.4px;top:164.0px;font-size:12px;line-height:16px;letter-spacing:-0.187px;color:#222;">Residuals - Distribu...ita_ppp_dollars</span>
<div class="a" style="left:925px;top:183px;width:106px;height:34.5px;background:#ebebeb;"></div>
<span class="t" style="left:1002.7px;top:194.3px;font-size:12px;line-height:16px;letter-spacing:-0.076px;color:#555;">olbar</span>
<div class="a" style="left:1031px;top:183px;width:17.5px;height:447px;background:#f1f1f1;"></div>
<div class="a" style="left:274px;top:614px;width:757px;height:16.5px;background:#efefef;"></div>
<div class="a" style="left:273px;top:630.5px;width:776px;height:23px;background:#f7f8f8;border-right:1px solid #d4d4d4;"></div>
<div class="a" style="left:845.5px;top:630.5px;width:202.5px;height:23px;background:#fff;"></div>
<span class="t" style="left:631.6px;top:635.2px;font-size:13px;line-height:16px;letter-spacing:-0.586px;color:#222;">Mode:</span>
<span class="t" style="left:719.3px;top:635.2px;font-size:13px;line-height:16px;letter-spacing:-0.611px;color:#222;">View:</span>
<div class="a" style="left:715px;top:631px;width:1px;height:21px;background:#c6c6c6;"></div>
<div class="a" style="left:842px;top:631px;width:1px;height:21px;background:#c6c6c6;"></div>
<div class="a" style="left:853px;top:641px;width:6.5px;height:2px;background:#444;"></div>
<div class="a" style="left:866px;top:640px;width:49px;height:3px;background:#707070;"></div>
<div class="a" style="left:917px;top:640px;width:49px;height:3px;background:#d8d8d8;"></div>
<div class="a" style="left:914px;top:636px;width:3.5px;height:11px;background:#707070;"></div>
<div class="a" style="left:972px;top:641px;width:8px;height:2px;background:#444;"></div>
<div class="a" style="left:975px;top:638px;width:2px;height:8px;background:#444;"></div>
<span class="t" style="left:992.4px;top:634.3px;font-size:12px;line-height:16px;letter-spacing:-0.772px;color:#222;">100%</span>
<svg class="a" style="left:1034.5px;top:639.5px" width="7" height="4" viewBox="0 0 7 4"><path d="M0 0h7l-3.5 4z" fill="#444"/></svg>
<div class="a" style="left:280px;top:190px;width:722px;height:440px;background:#fff;border:1px solid #0078c8;"></div>
<span class="t" style="left:289.4px;top:196.0px;font-size:12.5px;line-height:16px;letter-spacing:-0.600px;color:#444;font-weight:bold;">Message</span>
<span class="t" style="left:333.9px;top:232.6px;font-size:13px;line-height:16px;letter-spacing:0.038px;color:#666;">mmregression</span>
<svg class="a" style="left:982px;top:199px" width="9" height="9" viewBox="0 0 9 9"><path d="M0.5 0.5l8 8M8.5 0.5l-8 8" stroke="#666" stroke-width="1.2" fill="none"/></svg>
<div class="a" style="left:289px;top:264px;width:704px;height:324.5px;background:#fff;border:1px solid #d6d6d6;overflow:hidden;">
<pre class="a" style="left:12.3px;top:10px;font-size:11.667px;line-height:14px;color:#454545;">========= OLS =========

                            OLS Regression Results                            
==============================================================================
Dep. Variable:        Democracy_Index   R-squared:                       0.388
Model:                            OLS   Adj. R-squared:                  0.372
Method:                 Least Squares   F-statistic:                     23.93
Date:                Sun, 11 Aug 2024   Prob (F-statistic):           2.43e-15
Time:                        15:17:56   Log-Likelihood:                -182.56
No. Observations:                 156   AIC:                             375.1
Df Residuals:                     151   BIC:                             390.4
Df Model:                           4                                         
Covariance Type:            nonrobust                                         
==============================================================================================
                                 coef    std err          t      P&gt;|t|      [0.025      0.975]
----------------------------------------------------------------------------------------------
Intercept                   4.857e-17      0.063   7.65e-16      1.000      -0.125       0.125
GDP_per_Capita_PPP_Dollars     0.4012      0.134      2.994      0.003       0.136       0.666
MJ_per_Dollar_GDP             -0.0490      0.072     -0.679      0.498      -0.192       0.094
Resource_Rent_Percent_GDP     -0.3642      0.077     -4.737      0.000      -0.516      -0.212
Agriculture_Percent_GDP        0.0666      0.132      0.506      0.613      -0.193       0.327
==============================================================================
Omnibus:                        7.540   Durbin-Watson:                   2.147</pre>
<div class="a" style="left:685px;top:0px;width:18px;height:323px;background:#ececec;"></div>
<div class="a" style="left:689px;top:64px;width:9px;height:55px;background:#b2b2b2;border-radius:4.5px;"></div>
</div>
<div class="a" style="left:913px;top:597px;width:80px;height:24px;background:#fff;border:1px solid #444;"></div>
<span class="t" style="left:939.0px;top:602.0px;font-size:12px;line-height:16px;letter-spacing:-0.536px;color:#333;">Close</span>
<div class="a" style="left:1074px;top:159px;width:6px;height:40.5px;background:#c4c4c8;"></div>
<div class="a" style="left:1048px;top:183px;width:1px;height:470px;background:#d6d6d6;"></div>
<div class="a" style="left:1074px;top:212px;width:6px;height:37.5px;background:#c4c4c8;"></div>
<span class="t" style="left:1071px;top:158.800px;font-size:12.5px;line-height:14px;color:#333;transform-origin:0 0;transform:rotate(90deg);letter-spacing:-0.3px;">Catalog</span>
<span class="t" style="left:1071px;top:212px;font-size:12.5px;line-height:14px;color:#333;transform-origin:0 0;transform:rotate(90deg);letter-spacing:-0.1px;">History</span>
<div class="a" style="left:0px;top:660px;width:1080px;height:40px;background:#1b1b1b;"></div>
<div class="a" style="left:575px;top:660px;width:475px;height:4px;background:#111;"></div>
<div class="a" style="left:589px;top:655.5px;width:28px;height:1.5px;background:#f6f6f6;"></div>
<div class="a" style="left:48px;top:660px;width:288px;height:40px;background:#f3f3f3;border-top:1px solid #dadada;"></div>
<span class="t" style="left:89.0px;top:672.7px;font-size:15px;line-height:16px;letter-spacing:-0.309px;color:#333;">Type here to search</span>
<div class="a" style="left:485px;top:660px;width:48px;height:40px;background:#3c3c3c;"></div>
<div class="a" style="left:391px;top:697.5px;width:40px;height:2.5px;background:#76b9ed;"></div>
<div class="a" style="left:440px;top:697.5px;width:39.5px;height:2.5px;background:#76b9ed;"></div>
<div class="a" style="left:485px;top:697.5px;width:48px;height:2.5px;background:#76b9ed;"></div>
<span class="t" style="left:974.0px;top:663.0px;font-size:12px;line-height:16px;letter-spacing:-0.412px;color:#fff;">3:46 PM</span>
<span class="t" style="left:969.0px;top:680.7px;font-size:12px;line-height:16px;letter-spacing:-0.054px;color:#fff;">8/11/2024</span>
<div class="a" style="left:1075px;top:660px;width:1px;height:40px;background:#555;"></div>
<svg class="a" style="left:214.0px;top:173.75px" width="7" height="3.5" viewBox="0 0 7 3.5"><path d="M0 0L3.5 3.5L7 0" fill="none" stroke="#333" stroke-width="1.2"/></svg>
<svg class="a" style="left:231.5px;top:169.5px" width="8" height="10.5" viewBox="0 0 8 10.5"><path d="M2 0.500h4M2.500 0.500v5M5.500 0.500v5M0.500 5.800h7M4 5.800v4.500" fill="none" stroke="#333" stroke-width="1.100"/></svg>
<svg class="a" style="left:250px;top:170px" width="10" height="10" viewBox="0 0 10 10"><path d="M0.400 0.400l9.200 9.200M9.600 0.400l-9.200 9.200" stroke="#333" stroke-width="1.200"/></svg>
<svg class="a" style="left:11px;top:195.5px" width="13" height="15.5" viewBox="0 0 13 15.5"><path d="M0.600 0.600h11.800v1.200l-4.700 5.200v7.500h-2.400v-7.500l-4.700-5.200z" fill="#a8a8a8" stroke="#555" stroke-width="1"/></svg>
<svg class="a" style="left:225px;top:197.5px" width="12" height="11.5" viewBox="0 0 12 11.5"><circle cx="7.300" cy="4.300" r="3.500" fill="none" stroke="#444" stroke-width="1.300"/><path d="M4.800 6.800l-4.200 4.200" stroke="#444" stroke-width="1.500"/></svg>
<svg class="a" style="left:249.0px;top:201.75px" width="7" height="3.5" viewBox="0 0 7 3.5"><path d="M0 0L3.5 3.5L7 0" fill="none" stroke="#555" stroke-width="1.1"/></svg>
<svg class="a" style="left:27px;top:225px" width="23" height="22" viewBox="0 0 23 22"><path d="M5.500 6v12.500h7M5.500 11.500h7" fill="none" stroke="#444" stroke-width="1.100"/>
<path d="M1.500 0.500h7.500l1.200 4.800h-10z" fill="#f0d858"/><rect x="0.200" y="4.500" width="10" height="1.800" fill="#e0c030"/>
<path d="M13.500 8.500h7l1.200 4.300h-9.400z" fill="#f0d858"/><rect x="12.300" y="12" width="9.400" height="1.800" fill="#e0c030"/>
<path d="M13.500 15.800h7l1.200 4.300h-9.400z" fill="#f0d858"/><rect x="12.300" y="19.300" width="9.400" height="1.800" fill="#e0c030"/></svg>
<svg class="a" style="left:58.5px;top:226px" width="22" height="20" viewBox="0 0 22 20"><path d="M0.600 4.500v11c0 2.200 4.700 3.900 10.400 3.900s10.400-1.700 10.400-3.900v-11" fill="#f2f2f2"/><path d="M13 19.300c4.800-.4 8.400-1.900 8.400-3.800v-11l-8.400 3.500z" fill="#e2e2e2"/><ellipse cx="11" cy="4.500" rx="10.400" ry="3.900" fill="#f8f8f8" stroke="#9a9a9a" stroke-width="1"/><path d="M0.600 4.500v11c0 2.200 4.700 3.900 10.400 3.900s10.400-1.700 10.400-3.900v-11" fill="none" stroke="#9a9a9a" stroke-width="1"/></svg>
<svg class="a" style="left:91.5px;top:225.5px" width="21" height="21" viewBox="0 0 21 21"><rect x="0.700" y="0.700" width="19.600" height="19.600" rx="2" fill="#fff" stroke="#666" stroke-width="1.200"/><path d="M1.300 1.300h6.200c-.3 4 1 6.500 3 9s3.200 5.500 2.800 9.400h-12z" fill="#b8e8f8"/><path d="M7.500 1.300c-.3 4 1 6.500 3 9s3.200 5.500 2.800 9.400M10.800 10.800c1.500-3 5-4.800 9-5.200" fill="none" stroke="#666" stroke-width="1"/></svg>
<svg class="a" style="left:124px;top:226px" width="21" height="20" viewBox="0 0 21 20"><path d="M16.200 1.800l2.300 2.300-13.800 13.600-3 1 .8-3.200z" fill="#ecd648" stroke="#b8a030" stroke-width="0.700"/><path d="M16.200 1.800l1.100-1 2.300 2.300-1.100 1z" fill="#e89888"/><path d="M1.700 18.700l.6-2.200 1.600 1.600z" fill="#555"/></svg>
<svg class="a" style="left:155px;top:225px" width="23" height="23" viewBox="0 0 23 23"><path d="M0.600 0.600h15.800v8M0.600 0.600v15.800h9M8.500 0.600v15.800M0.600 8.500h15.800" fill="none" stroke="#777" stroke-width="1.100"/><path d="M17 10.500v12M11 16.500h12" stroke="#3b8fd0" stroke-width="1.800"/></svg>
<svg class="a" style="left:187px;top:225px" width="23" height="22" viewBox="0 0 23 22"><path d="M3 10.500L11.800 0.800L21.500 8.500L12.500 19.200L6.500 20.500L1.500 16.200z" fill="#f2e09c" stroke="#c0a050" stroke-width="1"/><path d="M8.500 9l6-6.200M10.500 11l6.500-6.700M12.500 13l6.500-6.700" stroke="#dcc478" stroke-width="0.800"/><circle cx="6" cy="15.200" r="1.900" fill="#fff" stroke="#777" stroke-width="1"/><path d="M4.600 16.600c-1.800.8-3.200 2.200-1.800 4" fill="none" stroke="#777" stroke-width="1"/></svg>
<svg class="a" style="left:254.3px;top:297.75px" width="7" height="3.5" viewBox="0 0 7 3.5"><path d="M0 3.5L3.5 0L7 3.5" fill="none" stroke="#555" stroke-width="1.1"/></svg>
<svg class="a" style="left:254.3px;top:642.75px" width="7" height="3.5" viewBox="0 0 7 3.5"><path d="M0 0L3.5 3.5L7 0" fill="none" stroke="#555" stroke-width="1.1"/></svg>
<svg class="a" style="left:10px;top:302px" width="6" height="6" viewBox="0 0 6 6"><path d="M5.800 0.200v5.600h-5.600z" fill="#555"/></svg>
<svg class="a" style="left:21px;top:297px" width="16" height="16" viewBox="0 0 16 16"><rect x="0.500" y="0.500" width="15" height="15" fill="#fff" stroke="#666" stroke-width="1"/><rect x="2" y="2" width="12" height="12" fill="#d4e8f8"/><path d="M2 2h9.300c-.3 2-1 3.600-2.300 4.600-1.200.9-2.600 1.400-3.400 2.400-.8 1.200-.2 2.800.9 5h-4.500z" fill="#9cc89c"/><path d="M9 14c.2-1.800 1.400-3.300 3-3.500 1-.1 1.700.6 2 1.500v2z" fill="#9cc89c"/></svg>
<svg class="a" style="left:21px;top:326px" width="6" height="6" viewBox="0 0 6 6"><path d="M5.800 0.200v5.600h-5.600z" fill="#555"/></svg>
<svg class="a" style="left:43px;top:395px" width="16" height="16" viewBox="0 0 16 16"><path d="M0.500 0v15.500h15.500" fill="none" stroke="#666" stroke-width="1"/><path d="M2.5 15V7M4.5 15V9M6.5 15V5M8.5 15V1M10.5 15V4M12.5 15V7M14.5 15V10" stroke="#6cb4e8" stroke-width="1.100"/></svg>
<svg class="a" style="left:21px;top:425px" width="6" height="6" viewBox="0 0 6 6"><path d="M5.800 0.200v5.600h-5.600z" fill="#555"/></svg>
<svg class="a" style="left:32.3px;top:421.3px" width="13.5" height="13.5" viewBox="0 0 13.5 13.5"><path d="M3 7l2.700 2.800 5-6" fill="none" stroke="#333" stroke-width="1.600"/></svg>
<svg class="a" style="left:43px;top:592.5px" width="16" height="16" viewBox="0 0 16 16"><path d="M0.500 0v15.500h15.500" fill="none" stroke="#666" stroke-width="1"/><path d="M2.5 15V7M4.5 15V9M6.5 15V5M8.5 15V1M10.5 15V4M12.5 15V7M14.5 15V10" stroke="#6cb4e8" stroke-width="1.100"/></svg>
<svg class="a" style="left:32.3px;top:619.3px" width="13.5" height="13.5" viewBox="0 0 13.5 13.5"><path d="M3 7l2.700 2.800 5-6" fill="none" stroke="#333" stroke-width="1.600"/></svg>
<svg class="a" style="left:279px;top:163px" width="16" height="16" viewBox="0 0 16 16"><rect x="0.500" y="0.500" width="15" height="15" fill="#fff" stroke="#666" stroke-width="1"/><rect x="2" y="2" width="12" height="12" fill="#d4e8f8"/><path d="M2 2h9.300c-.3 2-1 3.600-2.300 4.600-1.200.9-2.600 1.400-3.400 2.400-.8 1.200-.2 2.800.9 5h-4.500z" fill="#9cc89c"/><path d="M9 14c.2-1.800 1.400-3.300 3-3.500 1-.1 1.700.6 2 1.500v2z" fill="#9cc89c"/></svg>
<svg class="a" style="left:355.5px;top:164px" width="18" height="14" viewBox="0 0 18 14"><path d="M3 3l5 4-5 4M9 7h4" fill="none" stroke="#cfe4f6" stroke-width="1"/><rect x="0.500" y="0.500" width="4" height="4" fill="#cfe4f6"/><rect x="0.500" y="9.500" width="4" height="4" fill="#cfe4f6"/><circle cx="8.500" cy="7" r="2" fill="#f6dc8c"/><rect x="12.500" y="5" width="4.500" height="4.500" fill="#c8f0c0"/></svg>
<svg class="a" style="left:420.5px;top:167px" width="10.5" height="10.5" viewBox="0 0 10.5 10.5"><path d="M0.400 0.400l9.700 9.700M10.100 0.400l-9.700 9.700" stroke="#fff" stroke-width="1.300"/></svg>
<svg class="a" style="left:443px;top:163px" width="16" height="16" viewBox="0 0 16 16"><path d="M0.500 0v15.500h15.500" fill="none" stroke="#666" stroke-width="1"/><path d="M2.5 15V7M4.5 15V9M6.5 15V5M8.5 15V1M10.5 15V4M12.5 15V7M14.5 15V10" stroke="#6cb4e8" stroke-width="1.100"/></svg>
<svg class="a" style="left:687px;top:163px" width="16" height="16" viewBox="0 0 16 16"><path d="M0.500 0v15.500h15.500" fill="none" stroke="#666" stroke-width="1"/><path d="M2.5 15V7M4.5 15V9M6.5 15V5M8.5 15V1M10.5 15V4M12.5 15V7M14.5 15V10" stroke="#6cb4e8" stroke-width="1.100"/></svg>
<svg class="a" style="left:1036.0px;top:169.75px" width="7" height="3.5" viewBox="0 0 7 3.5"><path d="M0 0L3.5 3.5L7 0" fill="none" stroke="#555" stroke-width="1.1"/></svg>
<svg class="a" style="left:1035.5px;top:190.25px" width="7" height="3.5" viewBox="0 0 7 3.5"><path d="M0 3.5L3.5 0L7 3.5" fill="none" stroke="#c8c8c8" stroke-width="1.1"/></svg>
<svg class="a" style="left:1035.5px;top:603.25px" width="7" height="3.5" viewBox="0 0 7 3.5"><path d="M0 0L3.5 3.5L7 0" fill="none" stroke="#c8c8c8" stroke-width="1.1"/></svg>
<svg class="a" style="left:1020px;top:618px" width="4" height="8" viewBox="0 0 4 8"><path d="M0.300 0.300l3.400 3.700-3.400 3.700" fill="none" stroke="#c8c8c8" stroke-width="1.100"/></svg>
<svg class="a" style="left:288.5px;top:224px" width="34" height="31" viewBox="0 0 34 31"><path d="M9.500 8.500l4-3 18.500 21.500c1 1.400-2 4-3.300 2.800z" fill="#d8b088"/>
<path d="M0.500 9.500c2.500-5.500 8.500-9 17.500-9v1.500c-2.500.5-4.200 1.600-5.400 3.300l2.300 2.700-4 3.600-2.600-3c-2 .3-3.700 1.600-5 3.800z" fill="#6a6a6a"/></svg>
<svg class="a" style="left:979.5px;top:272.25px" width="7" height="3.5" viewBox="0 0 7 3.5"><path d="M0 3.5L3.5 0L7 3.5" fill="none" stroke="#555" stroke-width="1.1"/></svg>
<svg class="a" style="left:979.5px;top:578.75px" width="7" height="3.5" viewBox="0 0 7 3.5"><path d="M0 0L3.5 3.5L7 0" fill="none" stroke="#555" stroke-width="1.1"/></svg>
<svg class="a" style="left:987px;top:615px" width="10" height="11" viewBox="0 0 10 11"><rect x="8" y="0" width="1.500" height="1.500" fill="#b0b0b0"/><rect x="8" y="3" width="1.500" height="1.500" fill="#b0b0b0"/><rect x="8" y="6" width="1.500" height="1.500" fill="#b0b0b0"/><rect x="8" y="9" width="1.500" height="1.500" fill="#b0b0b0"/><rect x="5" y="6" width="1.500" height="1.500" fill="#b0b0b0"/><rect x="5" y="9" width="1.500" height="1.500" fill="#b0b0b0"/><rect x="2" y="9" width="1.500" height="1.500" fill="#b0b0b0"/><rect x="5" y="3" width="1.500" height="1.500" fill="#b0b0b0"/></svg>
<svg class="a" style="left:674.5px;top:636px" width="10" height="14" viewBox="0 0 10 14"><path d="M0.600 0.600v11l2.600-2.400 2 4.200 1.800-.8-2-4.100h3.600z" fill="#fff" stroke="#555" stroke-width="1"/></svg>
<svg class="a" style="left:692.5px;top:633px" width="17" height="19" viewBox="0 0 16 18"><path d="M4.500 10.500l-3-3.500c-.8-1 .5-2 1.400-1.200l1.800 1.800v-5.200c0-1.200 1.700-1.200 1.700 0v3.600-5c0-1.200 1.800-1.200 1.800 0v5-4.400c0-1.200 1.700-1.200 1.700 0v4.800-3.200c0-1.200 1.600-1.200 1.600 0v6.300c0 2-.6 3-1.200 4.500v2" fill="#fff" stroke="#b0b0b0" stroke-width="1" transform="rotate(-18 8 9) translate(1.500,1)"/></svg>
<svg class="a" style="left:753.8px;top:634px" width="15" height="16.5" viewBox="0 0 15 16.5"><path d="M0.600 0.600h9.400l4.400 4.400v11h-13.800z" fill="#fff" stroke="#666" stroke-width="1.100"/><path d="M10 0.600v4.400h4.400" fill="none" stroke="#666" stroke-width="1.100"/>
<rect x="3" y="5.500" width="3.400" height="3.400" fill="#e8f2fb" stroke="#3b95d6" stroke-width="1"/><circle cx="10.300" cy="7.300" r="1.700" fill="#fbf0cc" stroke="#d9a640" stroke-width="1"/>
<circle cx="4.700" cy="12.300" r="1.700" fill="#fbf0cc" stroke="#d9a640" stroke-width="1"/><rect x="8.500" y="10.600" width="3.400" height="3.400" fill="#eaf6e8" stroke="#5aa55a" stroke-width="1"/></svg>
<svg class="a" style="left:776px;top:634px" width="15.5" height="16.5" viewBox="0 0 15.5 16.5"><path d="M0.600 0.600h9.800l4.400 4.400v11h-14.200z" fill="#fff" stroke="#666" stroke-width="1.100"/><path d="M10.400 0.600v4.400h4.400" fill="none" stroke="#666" stroke-width="1"/>
<path d="M5 4.500l2.500-2.800 2.500 2.800zM5 12.800l2.500 2.800 2.500-2.800zM3.500 6.200l-2.800 2.400 2.800 2.400zM11.800 6.200l2.800 2.400-2.800 2.400z" fill="#777" stroke="#fff" stroke-width="0.800"/></svg>
<svg class="a" style="left:798px;top:634.5px" width="16.0" height="16.0" viewBox="0 0 16 16"><path d="M9.800 9.800L15 15" stroke="#c8935a" stroke-width="2.400" stroke-linecap="round"/><circle cx="6.300" cy="6.300" r="5.300" fill="#fff" stroke="#3b95d6" stroke-width="1.600"/><path d="M3.500 6.300h5.600" stroke="#333" stroke-width="1.700"/><path d="M6.300 3.500v5.600" stroke="#333" stroke-width="1.700"/></svg>
<svg class="a" style="left:820px;top:634.5px" width="16.0" height="16.0" viewBox="0 0 16 16"><path d="M9.800 9.800L15 15" stroke="#c8935a" stroke-width="2.400" stroke-linecap="round"/><circle cx="6.300" cy="6.300" r="5.300" fill="#fff" stroke="#3b95d6" stroke-width="1.600"/><path d="M3.500 6.300h5.600" stroke="#333" stroke-width="1.700"/></svg>
<svg class="a" style="left:16px;top:672px" width="17" height="17" viewBox="0 0 17 17"><path d="M0 2.400l6.800-1v6.600h-6.800zM7.800 1.300l8.800-1.300v8h-8.800zM0 9h6.800v6.600l-6.800-1zM7.800 9h8.800v8l-8.800-1.300z" fill="#fff"/></svg>
<svg class="a" style="left:60px;top:672px" width="17" height="17" viewBox="0 0 17 17"><circle cx="10.500" cy="6" r="5.200" fill="none" stroke="#222" stroke-width="1.300"/><path d="M6.800 9.800l-6.300 6.500" stroke="#222" stroke-width="1.400"/></svg>
<svg class="a" style="left:351px;top:671.5px" width="18" height="16" viewBox="0 0 18 16"><rect x="3" y="3.500" width="9" height="9" fill="none" stroke="#fff" stroke-width="1.300"/><path d="M0.500 0.800h12.500M0.500 15.200h12.500M0.800 0.800v2.200M12.700 0.800v2.200M0.800 15.200v-2.200M12.700 15.200v-2.200" stroke="#fff" stroke-width="1.200" fill="none"/><path d="M15.800 3.500v2M15.800 7.500v5" stroke="#fff" stroke-width="1.600"/></svg>
<svg class="a" style="left:400px;top:669.5px" width="23" height="20" viewBox="0 0 23 20"><path d="M0.500 2.500a1.500 1.500 0 0 1 1.500-1.500h6.500l2 2.500h10.500a1 1 0 0 1 1 1v14h-21.500z" fill="#f0b428"/><path d="M0.500 6.500h21.500v12.500h-21.500z" fill="#fcd462"/><path d="M4 12h14.500v7h-14.500z" fill="#3a98e0"/><path d="M8.500 15.500h5.500v3.500h-5.500z" fill="#fcd462"/></svg>
<svg class="a" style="left:447px;top:667px" width="26" height="26" viewBox="0 0 26 26"><defs><radialGradient id="fx" cx="0.600" cy="0.200" r="0.900"><stop offset="0" stop-color="#ffe040"/><stop offset="0.400" stop-color="#ff9a20"/><stop offset="0.750" stop-color="#ff4050"/><stop offset="1" stop-color="#e02080"/></radialGradient></defs>
<path d="M13 3c2-1 3.500-2.500 4-3 1 2 3 3.500 5 6.500 2.500 4 2.500 9-.5 12.800a11.300 11.300 0 0 1-17.500-.3c-3-4-2.800-9 .3-12.800.2 1.200.8 2.200 1.500 2.800.3-2.500 2-4.800 4.200-5.500.5 0 2 0 3-.5z" fill="url(#fx)"/>
<circle cx="12.500" cy="14.500" r="5.500" fill="#7040c0"/><path d="M7 13c1.500-2 4-2.500 6-1.500 1.500.8 3 .5 4-.5-1-2-3-3-5.500-3-2 0-4 1.800-4.500 5z" fill="#ff9a20"/></svg>
<svg class="a" style="left:497.5px;top:666.5px" width="23" height="26" viewBox="0 0 23 26"><path d="M11.500 0.500l10.800 6.200v12.600l-10.800 6.200-10.800-6.200v-12.600z" fill="#1878d8"/><circle cx="11.500" cy="13" r="7" fill="#fff"/><path d="M9 7.500c2 1 3 2.500 1.500 4s-3 2-2 4 3 2.500 3 4.500M14 7c-1 1.500 0 3 1.500 3.500s2.500 2 2 4" fill="none" stroke="#1878d8" stroke-width="2.200"/></svg>
<svg class="a" style="left:872.5px;top:676px" width="13.5" height="7.5" viewBox="0 0 13.5 7.5"><path d="M0.500 7l6.200-6.200 6.200 6.200" fill="none" stroke="#fff" stroke-width="1.300"/></svg>
<svg class="a" style="left:894.5px;top:674px" width="17" height="14" viewBox="0 0 17 14"><path d="M4 9.500a3 3 0 0 1 .5-6 4.500 4.500 0 0 1 8.500 1 3 3 0 0 1 0 5.500z" fill="#1878d8"/><circle cx="11.500" cy="9.500" r="4" fill="#2890f0" stroke="#fff" stroke-width="0.800"/><path d="M9.500 9a2 2 0 0 1 3.600-.8M13.500 10a2 2 0 0 1-3.600.8" fill="none" stroke="#fff" stroke-width="0.900"/></svg>
<svg class="a" style="left:919px;top:674px" width="16" height="13.5" viewBox="0 0 16 13.5"><rect x="4.500" y="0.600" width="11" height="8.500" fill="none" stroke="#fff" stroke-width="1.100"/><path d="M10 9v3M6.500 12.500h7" stroke="#fff" stroke-width="1.100"/><rect x="0.600" y="1.600" width="4" height="5.500" fill="#1b1b1b" stroke="#fff" stroke-width="1"/><path d="M2.600 7v5.500h4" fill="none" stroke="#fff" stroke-width="1"/></svg>
<svg class="a" style="left:943px;top:673.5px" width="17" height="14" viewBox="0 0 17 14"><path d="M0.600 4.500h3l3.500-3.500v12l-3.500-3.500h-3z" fill="none" stroke="#fff" stroke-width="1.100"/><path d="M9 4.500a3.500 3.500 0 0 1 0 5" fill="none" stroke="#fff" stroke-width="1"/><path d="M11 2.500a6 6 0 0 1 0 9" fill="none" stroke="#aaa" stroke-width="1"/><path d="M13 0.800a8.500 8.500 0 0 1 0 12.400" fill="none" stroke="#777" stroke-width="1"/></svg>
<svg class="a" style="left:1039px;top:671.5px" width="17" height="17" viewBox="0 0 17 17"><path d="M0.700 0.700h15.600v11.600h-5.800l-2.700 3.200-2.700-3.200h-4.400z" fill="none" stroke="#fff" stroke-width="1.300"/></svg>
</body></html>
